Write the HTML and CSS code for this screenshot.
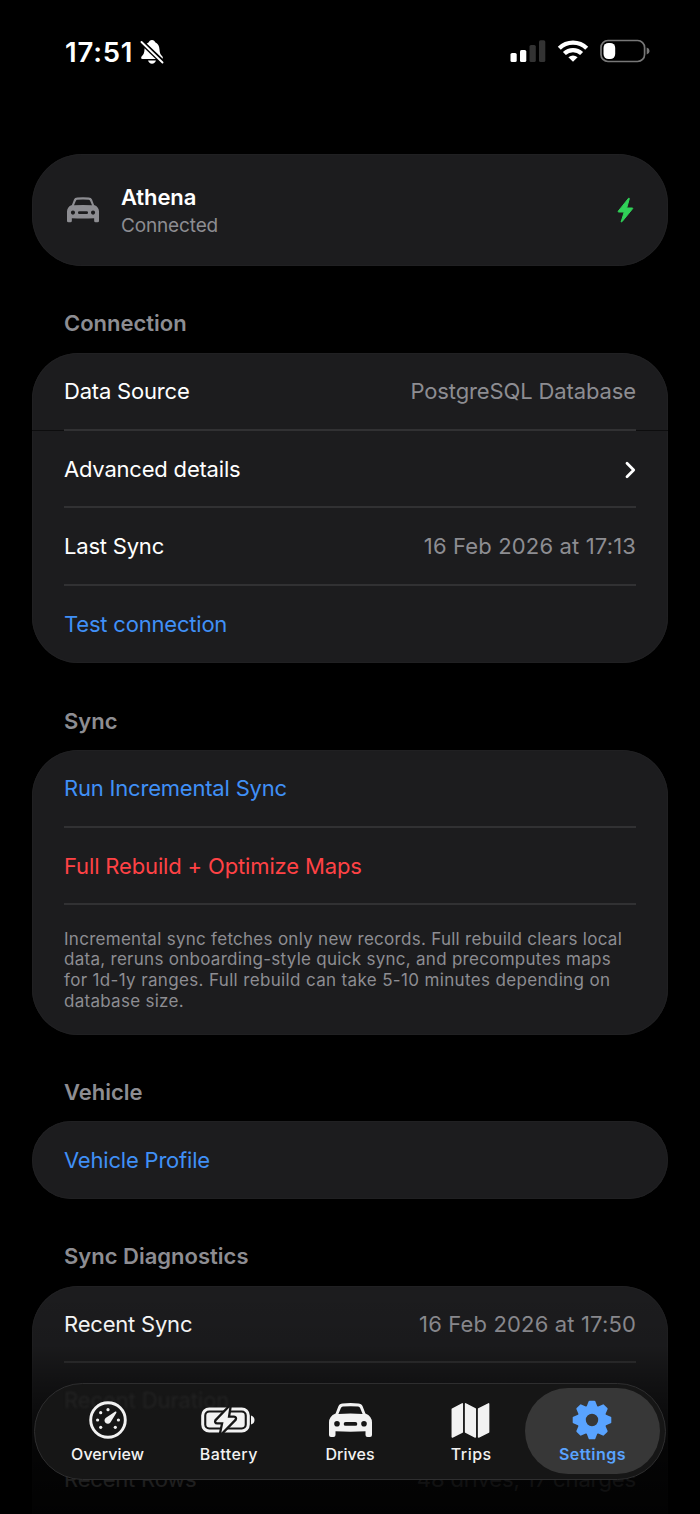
FILE: index.html
```html
<!DOCTYPE html>
<html lang="en">
<head>
<meta charset="utf-8">
<title>Settings</title>
<link rel="stylesheet" href="styles.css">
</head>
<body>
<svg width="0" height="0" class="defs">
  <symbol id="car" viewBox="0 0 43 34">
    <path fill-rule="evenodd" d="M9.4 3.2C10.2 1.4 11.600.7 13.600.5Q21.500-.3 29.400.5C31.400.7 32.800 1.400 33.600 3.200L36.400 10.600Q39.800 11.800 41.400 14.200Q43 16.400 43 19.300V32Q43 34 41 34H38.500Q36.500 34 36.500 32V28.300Q21.500 29 6.500 28.300V32Q6.500 34 4.500 34H2Q0 34 0 32V19.300Q0 16.400 1.600 14.200Q3.200 11.800 6.600 10.600ZM12 4.800L9.400 11Q21.500 10.200 33.600 11L31 4.800Q30.400 3.700 29.100 3.500Q21.500 2.800 13.900 3.500Q12.600 3.700 12 4.800ZM8 18A2.800 2.800 0 1 0 8 23.600A2.800 2.800 0 1 0 8 18ZM35 18A2.800 2.800 0 1 0 35 23.600A2.800 2.800 0 1 0 35 18ZM16.600 19A1.900 1.900 0 0 0 16.600 22.800H26.400A1.900 1.900 0 0 0 26.400 19Z"/>
  </symbol>
</svg>
<div class="screen">
  <header class="status">
    <div class="status-left">
      <span class="time">17:51</span>
      <svg class="bell" viewBox="0 0 24 26" width="24" height="26">
        <path fill="#fff" d="M12 1C13.700 1 14.900 2 15.200 3.300C18 4.600 19.300 7 19.500 10.500C19.700 14 20.300 15.500 22.300 17.300Q23.800 20 21.500 20H2.500Q.200 20 1.700 17.300C3.700 15.500 4.300 14 4.500 10.500C4.700 7 6 4.600 8.800 3.300C9.100 2 10.300 1 12 1ZM8 21.600H16Q15 24.700 12 24.700T8 21.600Z"/>
        <path stroke="#000" stroke-width="5" d="M0 1.500L24 24.500"/>
        <path stroke="#fff" stroke-width="1.900" stroke-linecap="round" d="M1.500 3L22.500 23.500"/>
      </svg>
    </div>
    <div class="status-right">
      <svg width="36" height="24" viewBox="0 0 36 24">
        <rect x=".5" y="14" width="6.200" height="9" rx="1.600" fill="#fff"/>
        <rect x="10" y="11" width="6.300" height="12" rx="1.600" fill="#fff"/>
        <rect x="19.500" y="6" width="6.300" height="17" rx="1.600" fill="#333"/>
        <rect x="29" y="1.300" width="6.300" height="21.700" rx="1.600" fill="#333"/>
      </svg>
      <svg class="wifi" width="32" height="24" viewBox="0 0 32 24" fill="none" stroke="#fff">
        <path stroke-width="4.300" d="M2.300 9.300A19.500 19.500 0 0 1 29.700 9.300"/>
        <path stroke-width="4.200" d="M7.400 14.600A12.200 12.200 0 0 1 24.600 14.600"/>
        <path fill="#fff" stroke="none" d="M16 22.800L11.400 18.300Q16 14.600 20.600 18.300Z"/>
      </svg>
      <svg width="50" height="24" viewBox="0 0 50 24">
        <rect x="1" y="1.500" width="43.600" height="21" rx="7" fill="none" stroke="#777" stroke-width="1.700"/>
        <rect x="3.500" y="3.900" width="11.700" height="16.200" rx="5" fill="#fff"/>
        <path fill="#777" d="M46.700 8.500Q49.600 9.400 49.600 12T46.700 15.500Z"/>
      </svg>
    </div>
  </header>

  <main class="list">
    <section class="card vehicle">
      <svg class="vehicle-icon" width="32" height="25.500"><use href="#car"/></svg>
      <div class="vehicle-text">
        <div class="vehicle-name">Athena</div>
        <div class="vehicle-state">Connected</div>
      </div>
      <svg class="bolt" width="17" height="26" viewBox="0 0 17 26"><path fill="#30d158" stroke="#30d158" stroke-linejoin="round" d="M11.600 1.200L1.200 14.200Q.9 15 1.600 15H7.200L4.200 24.800Q4.200 25.300 5 24.700L15.700 11.600Q16 11 15.300 11H9.700L12.300 1.700Q12.300.8 11.600 1.200Z"/></svg>
    </section>

    <h2 class="heading">Connection</h2>
    <section class="card">
      <div class="row"><span class="label">Data Source</span><span class="value">PostgreSQL Database</span></div>
      <div class="sep seam"></div>
      <div class="row"><span class="label">Advanced details</span>
        <svg class="chevron" width="11" height="18" viewBox="0 0 11 18"><path fill="none" stroke="#fff" stroke-width="2.800" stroke-linecap="round" stroke-linejoin="round" d="M2 2.300L8.700 9L2 15.700"/></svg>
      </div>
      <div class="sep"></div>
      <div class="row"><span class="label">Last Sync</span><span class="value date">16 Feb 2026 at 17:13</span></div>
      <div class="sep"></div>
      <div class="row"><span class="label link">Test connection</span></div>
    </section>

    <h2 class="heading">Sync</h2>
    <section class="card">
      <div class="row"><span class="label link">Run Incremental Sync</span></div>
      <div class="sep"></div>
      <div class="row"><span class="label danger">Full Rebuild + Optimize Maps</span></div>
      <div class="sep"></div>
      <p class="note">Incremental sync fetches only new records. Full rebuild clears local<br>data, reruns onboarding-style quick sync, and precomputes maps<br><span class="wide">for 1d-1y ranges. Full rebuild can take 5-10 minutes depending on</span><br>database size.</p>
    </section>

    <h2 class="heading">Vehicle</h2>
    <section class="card">
      <div class="row"><span class="label link">Vehicle Profile</span></div>
    </section>

    <h2 class="heading">Sync Diagnostics</h2>
    <section class="card">
      <div class="row"><span class="label">Recent Sync</span><span class="value date">16 Feb 2026 at 17:50</span></div>
      <div class="sep"></div>
      <div class="row"></div>
      <div class="sep"></div>
      <div class="row"><span class="label">Recent Rows</span><span class="value">48 drives, 17 charges</span></div>
      <div class="row"></div>
    </section>
  </main>

  <div class="fade"></div>
  <nav class="tabs">
    <span class="ghost">Recent Duration</span>
    <a class="tab">
      <svg width="40" height="40" viewBox="-20 -20 40 40" fill="#f2f2f2">
        <circle r="17.300" fill="none" stroke="#f2f2f2" stroke-width="2.900"/>
        <circle cx="0" cy="-10.300" r="1.600"/><circle cx="-7.300" cy="-7.300" r="1.600"/><circle cx="-10.400" cy="0" r="1.600"/><circle cx="10.400" cy="0" r="1.600"/><circle cx="-7.300" cy="7.300" r="1.600"/><circle cx="7.300" cy="7.300" r="1.600"/>
        <path d="M7.300-8.400Q8.800-8.600 8.400-7.200L2.600 2.200A3.300 3.300 0 1 1-2.400-2Z"/>
      </svg>
      <span class="tight">Overview</span>
    </a>
    <a class="tab">
      <svg width="56" height="40" viewBox="0 0 56 40">
        <rect x="1.700" y="9" width="45.600" height="22" rx="6.500" fill="none" stroke="#f2f2f2" stroke-width="3"/>
        <rect x="5.300" y="12.600" width="38.400" height="14.800" rx="3.200" fill="#f2f2f2"/>
        <path fill="#f2f2f2" d="M50 15.500Q53.500 16.500 53.500 20T50 24.500Z"/>
        <path fill="#f2f2f2" stroke="#161616" stroke-width="4.600" paint-order="stroke" d="M28.300 7.500L15.400 20.900Q14.800 22.200 16.100 22.200H22.500L20.300 32.700L33.700 19.100Q34.300 17.800 33 17.800H26.700Z"/>
      </svg>
      <span>Battery</span>
    </a>
    <a class="tab">
      <svg class="tab-car" width="43" height="34" fill="#f2f2f2"><use href="#car"/></svg>
      <span class="tight">Drives</span>
    </a>
    <a class="tab">
      <svg width="40" height="40" viewBox="0 0 40 40" fill="#f2f2f2" stroke="#f2f2f2" stroke-width="1.500" stroke-linejoin="round">
        <path d="M1.300 9.200L11.300 3.800V32L1.300 37ZM14.600 3.800L24.300 9V37L14.600 32ZM27.600 9L37.600 3.800V32L27.600 37Z"/>
      </svg>
      <span>Trips</span>
    </a>
    <a class="tab active">
      <svg width="40" height="40" viewBox="-20 -20 40 40" fill="#59a3ff">
        <circle r="10.400" fill="none" stroke="#59a3ff" stroke-width="8.400"/>
        <g stroke="#59a3ff" stroke-width="2" stroke-linejoin="round">
          <path id="tooth" d="M-2.400-18.300H2.400L4.700-12.500H-4.700Z"/>
          <use href="#tooth" transform="rotate(45)"/><use href="#tooth" transform="rotate(90)"/><use href="#tooth" transform="rotate(135)"/><use href="#tooth" transform="rotate(180)"/><use href="#tooth" transform="rotate(225)"/><use href="#tooth" transform="rotate(270)"/><use href="#tooth" transform="rotate(315)"/>
        </g>
      </svg>
      <span>Settings</span>
    </a>
  </nav>
</div>
</body>
</html>
```
FILE: styles.css
```css
* { box-sizing: border-box; }
body {
  margin: 0;
  background: #000;
  color: #fff;
  font-family: Inter, "Liberation Sans", sans-serif;
}
.defs { position: absolute; }
.screen {
  position: relative;
  width: 700px;
  height: 1514px;
  overflow: hidden;
  background: #000;
}
.status {
  display: flex;
  justify-content: space-between;
  height: 154px;
  padding: 39px 50px 0 65px;
}
.status-left, .status-right { display: flex; align-items: flex-start; }
.time { width: 70px; font-size: 27.500px; font-weight: 600; line-height: 27px; letter-spacing: .8px; }
.bell { margin-left: 5px; }
.wifi { margin: 0 11px; }
.list { padding: 0 32px; }
.card {
  background: #1c1c1e;
  border-radius: 46px;
  box-shadow: inset 0 0 0 1px #202022;
}
.vehicle {
  display: flex;
  align-items: center;
  height: 112.200px;
  padding: 0 34px 0 35px;
  border-radius: 50px;
}
.vehicle-icon { fill: #8d8d92; }
.vehicle-text { flex: 1; padding: 3px 0 0 22px; }
.vehicle-name { font-size: 22px; font-weight: 600; line-height: 27px; letter-spacing: -.1px; }
.vehicle-state { font-size: 19px; line-height: 29px; color: #8d8d92; letter-spacing: -.15px; }
.heading {
  margin: 0;
  height: 86.800px;
  padding: 43.300px 32px 0;
  font-size: 22px;
  font-weight: 600;
  line-height: 28px;
  letter-spacing: 0;
  color: #8d8d92;
}
.row {
  display: flex;
  align-items: center;
  justify-content: space-between;
  height: 77.600px;
  padding: 0 32px 1px;
  font-size: 22px;
  letter-spacing: -.2px;
}
.chevron { margin-top: 2px; }
.value { color: #8d8d92; letter-spacing: -.12px; }
.date { letter-spacing: .15px; }
.link { color: #4090f7; }
.danger { color: #ff4245; letter-spacing: -.15px; }
.sep { height: 2px; margin: -2px 32px 0; background: #313133; }
.seam {
  margin: -2px 0 0;
  background:
    linear-gradient(#313133, #313133) 32px 0 / 572px 2px no-repeat,
    linear-gradient(#0d0d0e, #0d0d0e) 0 1px / 636px 1px no-repeat;
}
.note {
  margin: 0;
  height: 129.200px;
  padding: 23.500px 32px 0;
  font-size: 17px;
  line-height: 20.600px;
  letter-spacing: .28px;
  white-space: nowrap;
  color: #8d8d92;
}
.wide { letter-spacing: .35px; }
.fade {
  position: absolute;
  left: 0;
  right: 0;
  top: 1290px;
  bottom: 0;
  background: linear-gradient(rgba(0,0,0,0), rgba(0,0,0,.08) 25%, rgba(0,0,0,.4) 42%, rgba(0,0,0,.82) 72%, rgba(0,0,0,.88) 86%, rgba(0,0,0,.92));
}
.tabs {
  position: absolute;
  z-index: 1;
  left: 34px;
  top: 1383px;
  width: 632px;
  height: 97px;
  padding: 0 12px;
  display: flex;
  border-radius: 49px;
  background: #161616;
  border: 1.500px solid #2e2e2f;
}
.tab {
  position: relative;
  flex: 1;
  display: flex;
  flex-direction: column;
  align-items: center;
  padding-top: 16px;
  color: #f2f2f2;
  font-size: 16px;
  font-weight: 500;
  line-height: 20px;
  letter-spacing: .45px;
}
.tab svg { margin-bottom: 4px; }
.tab .tab-car { margin: 3px 0 7px; }
.tight { letter-spacing: .05px; }
.active { color: #59a3ff; font-weight: 600; }
.active::before {
  content: "";
  position: absolute;
  z-index: -1;
  left: -7px;
  top: 4px;
  width: 135px;
  height: 86px;
  border-radius: 43px;
  background: #373737;
}
.ghost {
  position: absolute;
  left: 29px;
  top: 3px;
  font-size: 22px;
  letter-spacing: -.1px;
  color: #222;
  filter: blur(1.200px);
}
```
